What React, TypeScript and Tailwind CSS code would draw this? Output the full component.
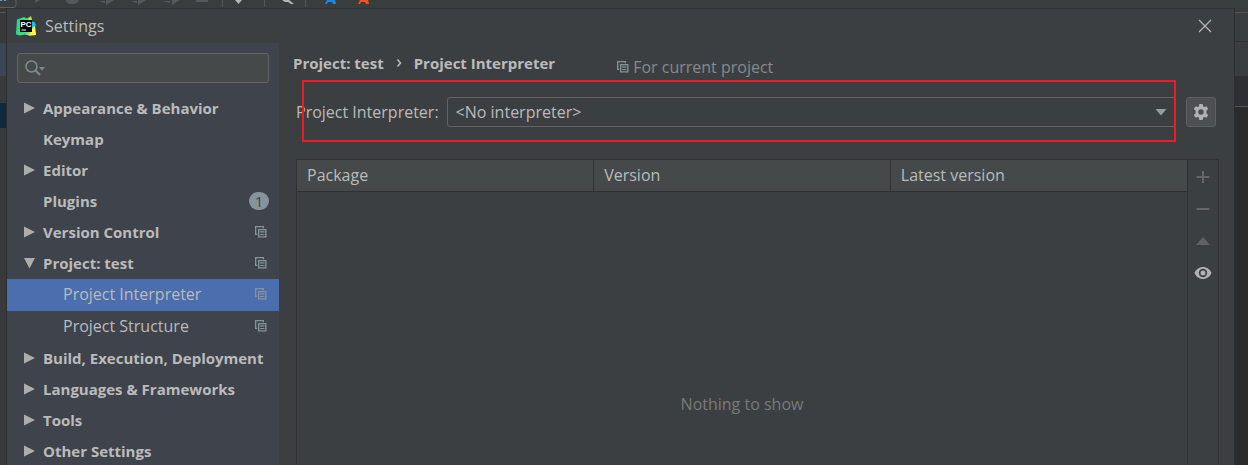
import { useState } from "react";

type Node = {
  label: string;
  state?: "closed" | "open";
  child?: boolean;
  badge?: number;
  projectLevel?: boolean;
};

const nodes: Node[] = [
  { label: "Appearance & Behavior", state: "closed" },
  { label: "Keymap" },
  { label: "Editor", state: "closed" },
  { label: "Plugins", badge: 1 },
  { label: "Version Control", state: "closed", projectLevel: true },
  { label: "Project: test", state: "open", projectLevel: true },
  { label: "Project Interpreter", child: true, projectLevel: true },
  { label: "Project Structure", child: true, projectLevel: true },
  { label: "Build, Execution, Deployment", state: "closed" },
  { label: "Languages & Frameworks", state: "closed" },
  { label: "Tools", state: "closed" },
  { label: "Other Settings", state: "closed" },
];

function CopyIcon() {
  return (
    <svg width="12" height="12" viewBox="0 0 12 12" className="shrink-0 fill-[#87939a]" aria-hidden="true">
      <path d="M0 0h9v2.300H7.700V1.300H1.300v6.400h1V9H0z" />
      <path fillRule="evenodd" d="M3 3h8.500v8.500H3zM4.300 4.300v5.900h5.900V4.300z" />
      <path d="M5 5.300h4.500v1.200H5zM5 7.900h4.500v1.200H5z" />
    </svg>
  );
}

function Arrow({ state }: { state?: "closed" | "open" }) {
  return (
    <svg width="12" height="12" viewBox="0 0 12 12" className="shrink-0 fill-[#adadad]" aria-hidden="true">
      {state === "closed" && <path d="M1 0.500v11L12 6z" />}
      {state === "open" && <path d="M1 1h11L6.500 11.500z" />}
    </svg>
  );
}

function PyCharmLogo() {
  return (
    <svg width="20" height="20" viewBox="0 0 20 20" aria-hidden="true">
      <defs>
        <linearGradient id="pc" x1="0" y1="0.3" x2="1" y2="0.8">
          <stop offset="0" stopColor="#21d789" />
          <stop offset="0.5" stopColor="#3ddc84" />
          <stop offset="1" stopColor="#fcf84a" />
        </linearGradient>
      </defs>
      <path d="M1 3.500 8 1l3 1.500L15 .300 15.500 4 15 16H3L0 18z" fill="url(#pc)" />
      <path d="M12 2.500 15 .300 16 4h-4z" fill="#b9e34a" />
      <path d="M15.500 5.500 18.500 6l1.500 3-2 3-2.500 1z" fill="#07c3f2" />
      <path d="M0 18.500 1.500 10l14 5 3-2L20 19l-7 .500-4-1-5 1z" fill="url(#pc)" />
      <path d="M17 11l2-1 1 9-7 .500z" fill="#fcf84a" />
      <path d="M4 4h12v12H4z" fill="#000" />
      <path d="M5.500 13.500h4.500v1H5.500z" fill="#fff" />
      <text x="4.500" y="10.500" fill="#fff" fontSize="8" fontWeight="700" fontFamily="Liberation Sans, sans-serif">PC</text>
    </svg>
  );
}

function ToolbarStrip() {
  return (
    <div className="h-2 shrink-0 overflow-hidden bg-[#3a3d3e]" aria-hidden="true">
      <svg width="400" height="8" viewBox="0 0 400 8">
        <path d="M0 7.500h13q3 0 3-3V0" fill="none" stroke="#5e6060" />
        <path d="M0 0h2v1H0zM4 0h2v1H4z" fill="#56a0d8" />
        <path d="M35 0h5l-5 3zM66 0h13q-1 4-7 4t-6-4zM99 1h6v2zM106 0h8l-8 5zM131 1h6v2zM138 0h8l-8 5zM162 1h8v2zM172 0h8l-8 5zM196 0h12v2h-12z" fill="#55585a" />
        <path d="M222.500 0v7M264.500 0v7M305.500 0v7" stroke="#55585a" />
        <path d="M235 0h7l-3.500 4zM282 0h7l5 4h-3l-3-2h-3z" fill="#b4b6b8" />
        <path d="M327 0h8l1 4h-3l-1-2h-4l-1 2h-2z" fill="#1e88e5" />
        <path d="M360 0h8l1 4h-3l-1-2h-4l-1 2h-2z" fill="#f4511e" />
      </svg>
    </div>
  );
}

function Sidebar({ selected, onSelect }: { selected: string; onSelect: (label: string) => void }) {
  return (
    <aside className="flex w-[272px] shrink-0 flex-col bg-[#3e434c]">
      <div className="mx-[10px] mt-[10px] flex h-[30px] items-center rounded-[3px] border border-[#646464] bg-[#45494a] px-[7px] focus-within:border-[#8a8a8a]">
        <svg width="20" height="16" viewBox="0 0 20 16" fill="none" className="shrink-0" aria-hidden="true">
          <circle cx="6.500" cy="6.500" r="5.500" stroke="#7f8b91" strokeWidth="1.500" />
          <path d="M10.500 10.500 15 15" stroke="#7f8b91" strokeWidth="2" />
          <path d="M14 7h6l-3 3.500z" fill="#7f8b91" />
        </svg>
        <input type="text" aria-label="Search settings" className="ml-1 w-full min-w-0 bg-transparent outline-none" />
      </div>
      <ul className="mt-[10px]">
        {nodes.map((node) => (
          <li key={node.label}>
            <button
              type="button"
              onClick={() => onSelect(node.label)}
              className={`flex w-full items-center pb-[2px] pr-3 text-left ${node.child ? "h-8 pl-14" : "h-[31px] pl-4 text-[15px] font-bold"} ${node.label === selected ? "bg-[#4b6eaf]" : ""}`}
            >
              {!node.child && <Arrow state={node.state} />}
              <span className={`grow whitespace-nowrap ${node.child ? "" : "ml-2"}`}>{node.label}</span>
              {node.projectLevel && <CopyIcon />}
              {node.badge && (
                <span className="-mr-[2px] flex h-[18px] w-5 shrink-0 items-center justify-center rounded-full bg-[#87939a] font-normal text-[#3e434c]">
                  {node.badge}
                </span>
              )}
            </button>
          </li>
        ))}
      </ul>
    </aside>
  );
}

function InterpreterRow() {
  return (
    <div className="relative mt-5 flex items-center pl-[3px]">
      <label htmlFor="interpreter">Project Interpreter:</label>
      <div className="relative ml-2 flex grow items-center">
        <select
          id="interpreter"
          className="h-[30px] w-full appearance-none rounded-[3px] border border-[#646464] bg-[#3c3f41] pl-2 pr-8 outline-none"
        >
          <option>&lt;No interpreter&gt;</option>
        </select>
        <svg width="12" height="7" viewBox="0 0 12 7" className="pointer-events-none absolute right-[9px] fill-[#9a9da0]" aria-hidden="true">
          <path d="M0.500 0h11L6 6.500z" />
        </svg>
      </div>
      <button
        type="button"
        aria-label="Interpreter options"
        className="ml-[10px] flex h-[30px] w-[30px] items-center justify-center rounded-[3px] border border-[#5e6060] bg-[#4c5052]"
      >
        <svg width="16" height="16" viewBox="0 0 16 16" fill="#afb1b3" aria-hidden="true">
          <path
            fillRule="evenodd"
            d="M6.300 0h3.400l.4 2.300 1.200.7 2.200-.8 1.700 2.900-1.800 1.500v2.800l1.800 1.500-1.700 2.900-2.200-.8-1.200.7L9.700 16H6.300l-.4-2.300-1.200-.7-2.200.8L.8 10.900l1.800-1.500V6.600L.8 5.100l1.700-2.900 2.200.8 1.200-.7zM8 5.200a2.800 2.800 0 1 0 0 5.600 2.800 2.800 0 0 0 0-5.600z"
          />
        </svg>
      </button>
      <div className="pointer-events-none absolute -bottom-[15px] -top-[17px] left-[9px] right-[40px] border-2 border-[#ed1c24]" />
    </div>
  );
}

function PackageTable() {
  return (
    <div className="mt-8 ml-[3px] -mr-[3px] flex grow border border-b-0 border-[#323232]">
      <div className="flex grow flex-col">
        <table className="w-full table-fixed border-collapse">
          <thead>
            <tr className="h-[31px] border-b border-[#323232] bg-[#45494a] text-left">
              <th className="w-1/3 border-r border-[#323232] pl-[10px] font-normal">Package</th>
              <th className="w-1/3 border-r border-[#323232] pl-[10px] font-normal">Version</th>
              <th className="pl-[10px] font-normal">Latest version</th>
            </tr>
          </thead>
        </table>
        <p className="mt-[202px] text-center text-[#7a7a7a]">Nothing to show</p>
      </div>
      <div className="flex w-[31px] shrink-0 flex-col items-center gap-4 border-l border-[#323232] pt-[9px]">
        <button type="button" aria-label="Add package" className="text-[#646667]">
          <svg width="16" height="16" viewBox="0 0 16 16" fill="currentColor"><path d="M7 2h2v5h5.500v2H9v5H7V9H1.500V7H7z" /></svg>
        </button>
        <button type="button" aria-label="Remove package" className="text-[#646667]">
          <svg width="16" height="16" viewBox="0 0 16 16" fill="currentColor"><path d="M1.500 7h13v2h-13z" /></svg>
        </button>
        <button type="button" aria-label="Upgrade package" className="text-[#5f6162]">
          <svg width="16" height="16" viewBox="0 0 16 16" fill="currentColor"><path d="M1 12h14L8 4z" /></svg>
        </button>
        <button type="button" aria-label="Show early releases" className="text-[#afb1b3]">
          <svg width="18" height="16" viewBox="0 0 18 16" fill="currentColor">
            <path fillRule="evenodd" d="M9 2c4 0 7 2.500 8.500 6C16 11.500 13 14 9 14S2 11.500.500 8C2 4.500 5 2 9 2zm0 1.800a4.200 4.200 0 1 0 0 8.400 4.200 4.200 0 0 0 0-8.400z" />
            <circle cx="9" cy="8" r="2.500" />
          </svg>
        </button>
      </div>
    </div>
  );
}

export default function App() {
  const [selected, setSelected] = useState("Project Interpreter");

  return (
    <div className="flex min-h-screen flex-col bg-[#2b2b2b] font-['Open_Sans','Noto_Sans',sans-serif] text-base leading-5 text-[#bbbbbb]">
      <ToolbarStrip />
      <div className="flex grow">
        <div className="flex w-[7px] shrink-0 flex-col border-r border-[#2b2d2e] bg-[#37393b]" aria-hidden="true">
          <div className="mt-1 h-[31px] border-t border-[#555555]" />
          <div className="h-[33px] bg-[#3a4654]" />
          <div className="mt-[27px] h-[25px] bg-[#0d293e]" />
        </div>
        <div className="flex min-w-0 grow flex-col border-t border-[#323435] bg-[#3c3f41]">
          <header className="flex h-[34px] shrink-0 items-center pl-[9px]">
            <PyCharmLogo />
            <h1 className="ml-[9px] grow">Settings</h1>
            <button type="button" aria-label="Close" className="mr-[22px]">
              <svg width="14" height="14" viewBox="0 0 14 14" fill="none" stroke="#b4b6b8" strokeWidth="1.200">
                <path d="M1 1l12 12M13 1 1 13" />
              </svg>
            </button>
          </header>
          <div className="flex grow">
            <Sidebar selected={selected} onSelect={setSelected} />
            <main className="flex min-w-0 grow flex-col pl-[14px] pr-[18px] pt-[10px]">
              <div className="flex items-start">
                <h2 className="flex items-center text-[15px] leading-5 font-bold">
                  Project: test
                  <svg width="6" height="10" viewBox="0 0 6 10" fill="none" stroke="#bbbbbb" strokeWidth="1.500" className="mx-3" aria-hidden="true">
                    <path d="M1.500 1.500 4.500 5l-3 3.500" />
                  </svg>
                  Project Interpreter
                </h2>
                <p className="ml-[62px] mt-1 flex items-center gap-1 text-[#87898b]">
                  <CopyIcon />
                  For current project
                </p>
              </div>
              <InterpreterRow />
              <PackageTable />
            </main>
          </div>
        </div>
        <div className="flex w-[14px] shrink-0 flex-col border-l border-[#2b2d2e]" aria-hidden="true">
          <div className="h-[34px] border-b border-[#2f3133] bg-[#3a3d3e] pt-1">
            <div className="border-t border-[#555555]" />
          </div>
          <div className="h-[34px] bg-[#3a3d3e]" />
          <div className="h-[31px] border-b border-[#555555] bg-[#2d2f30]" />
        </div>
      </div>
    </div>
  );
}
